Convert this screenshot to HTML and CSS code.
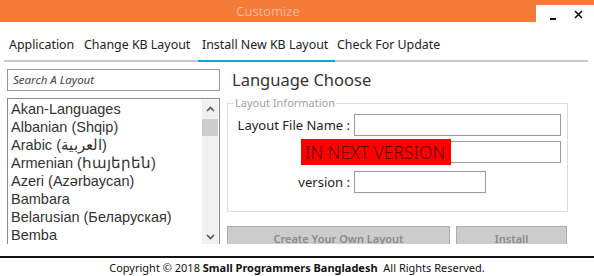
FILE: index.html
```html
<!DOCTYPE html>
<html lang="en">
<head>
    <meta charset="UTF-8">
    <title>Customize</title>
    <link rel="stylesheet" href="styles.css">
</head>
<body>
    <div class="window">
        <div class="titlebar">
            <div class="title">Customize</div>
            <div class="controls">
                <span class="ctl min"></span>
                <span class="ctl close">
                    <svg width="9" height="9" viewBox="0 0 9 9"><path d="M1 1L8 8M8 1L1 8" stroke="#111" stroke-width="1.6"/></svg>
                </span>
            </div>
        </div>

        <div class="tabs">
            <div class="tab t1">Application</div>
            <div class="tab t2">Change KB Layout</div>
            <div class="tab t3 active">Install New KB Layout</div>
            <div class="tab t4">Check For Update</div>
        </div>

        <div class="main">
            <div class="left">
                <input class="search" type="text" placeholder="Search A Layout">
                <div class="list">
                    <ul class="items">
                        <li>Akan-Languages</li>
                        <li>Albanian (Shqip)</li>
                        <li>Arabic (العربية)</li>
                        <li>Armenian (հայերեն)</li>
                        <li>Azeri (Azərbaycan)</li>
                        <li>Bambara</li>
                        <li>Belarusian (Беларуская)</li>
                        <li>Bemba</li>
                    </ul>
                    <div class="scroll">
                        <svg class="arrow" width="9" height="6" viewBox="0 0 9 6"><path d="M1 5L4.5 1.5L8 5" fill="none" stroke="#555" stroke-width="1.6"/></svg>
                        <div class="thumb"></div>
                        <div class="track"></div>
                        <svg class="arrow" width="9" height="6" viewBox="0 0 9 6"><path d="M1 1L4.5 4.5L8 1" fill="none" stroke="#555" stroke-width="1.6"/></svg>
                    </div>
                </div>
            </div>

            <div class="right">
                <h2>Language Choose</h2>
                <fieldset class="group">
                    <legend>Layout Information</legend>
                    <div class="row">
                        <label class="lbl">Layout File Name :</label>
                        <input class="field wide" type="text">
                    </div>
                    <div class="row red-row">
                        <span class="next">IN NEXT VERSION</span>
                        <input class="field behind" type="text">
                    </div>
                    <div class="row">
                        <label class="lbl">version :</label>
                        <input class="field short" type="text">
                    </div>
                </fieldset>
                <div class="buttons">
                    <button class="btn create">Create Your Own Layout</button>
                    <button class="btn install">Install</button>
                </div>
            </div>
        </div>

        <div class="footer">
            Copyright © 2018 <b>Small Programmers Bangladesh</b>&nbsp; All Rights Reserved.
        </div>
    </div>
</body>
</html>
```

FILE: styles.css
```css
body {
    margin: 0;
    font-family: "Noto Sans", "Open Sans", sans-serif;
    background: #fff;
    color: #222;
}
.window {
    width: 594px;
    height: 276px;
    overflow: hidden;
}
.titlebar {
    height: 22px;
    background-color: #f47a38;
    display: flex;
}
.title {
    flex: 1;
    text-align: center;
    color: #f9cdb8;
    font-size: 13px;
    font-weight: 300;
    line-height: 22px;
    letter-spacing: 0.2px;
}
.controls {
    width: 58px;
    height: 17px;
    margin-top: 5px;
    background: #fff;
    display: flex;
}
.ctl {
    width: 29px;
    display: flex;
    align-items: center;
    justify-content: center;
}
.min::after {
    content: "";
    width: 6px;
    height: 2px;
    background: #111;
    margin-top: 10px;
    margin-left: 4px;
}
.close svg {
    margin-top: 2px;
    margin-left: -3px;
}

.tabs {
    display: flex;
    margin: 0 6px 0 4px;
    height: 40px;
}
.tab {
    font-size: 12.4px;
    padding: 14px 0 0 4px;
    border-bottom: 2px solid #c8c8c8;
    white-space: nowrap;
    box-sizing: border-box;
}
.t1 { width: 76px; padding-left: 5px; }
.t2 { width: 118px; }
.t3 { width: 137px; border-bottom-color: #00a8e0; }
.t4 { flex: 1; padding-left: 2px; }

.main {
    display: flex;
    height: 182px;
    overflow: hidden;
}
.left {
    width: 213px;
    margin-left: 7px;
    padding-top: 5px;
}
.search {
    width: 100%;
    height: 22px;
    box-sizing: border-box;
    border: 1px solid #999;
    padding: 0 5px;
    font-family: "Noto Sans", sans-serif;
    font-size: 11.5px;
    font-style: italic;
    outline: none;
}
.search::placeholder {
    color: #444;
}
.list {
    margin-top: 7px;
    height: 148px;
    box-sizing: border-box;
    border: 1px solid #8a8a8a;
    border-bottom: none;
    display: flex;
    overflow: hidden;
}
.items {
    flex: 1;
    list-style: none;
    margin: 0;
    padding: 1px 0 0 3px;
    font-family: "Liberation Sans", Arial, sans-serif;
    font-size: 14.5px;
    line-height: 18px;
    color: #333;
}
.scroll {
    width: 16px;
    margin: 1px 1px 0 0;
    background: #f0f0f0;
    display: flex;
    flex-direction: column;
    align-items: center;
}
.arrow {
    margin: 6px 0;
}
.thumb {
    width: 16px;
    height: 17px;
    background: #cdcdcd;
    margin-top: 1px;
}
.track {
    flex: 1;
}

.right {
    width: 341px;
    margin-left: 7px;
}
h2 {
    font-size: 16.5px;
    font-weight: 400;
    color: #333;
    margin: 6px 0 0 5px;
    line-height: 24px;
}
.group {
    margin: 5px 0 0 0;
    padding: 5px 0 15px 0;
    border: 1px solid #dcdcdc;
}
legend {
    font-size: 11px;
    color: #a0a0a0;
    padding: 0 1px;
    margin-left: 6px;
    line-height: 12px;
}
.row {
    display: flex;
    align-items: center;
    height: 21px;
    margin-bottom: 4px;
}
.lbl {
    width: 122px;
    text-align: right;
    font-size: 13px;
    color: #222;
    margin-right: 4px;
}
.field {
    height: 22px;
    box-sizing: border-box;
    border: 1px solid #9a9a9a;
    outline: none;
}
.wide { width: 207px; }
.short { width: 132px; }
.red-row {
    height: 26px;
    margin-bottom: 6px;
    padding-left: 73px;
}
.next {
    width: 150px;
    height: 26px;
    background: #ff0000;
    color: #5a0000;
    font-size: 17.5px;
    font-weight: 300;
    line-height: 26px;
    padding-left: 4px;
    box-sizing: border-box;
    white-space: nowrap;
    overflow: hidden;
}
.behind {
    width: 110px;
    border-left: none;
}
.buttons {
    display: flex;
    gap: 6px;
    margin-top: 14px;
}
.btn {
    height: 24px;
    background-color: #cccccc;
    border: 1px solid #adadad;
    color: #8a8a8a;
    font-family: "Noto Sans", sans-serif;
    font-size: 11px;
    font-weight: 600;
    padding: 0;
}
.create { width: 223px; }
.install { width: 111px; }

.footer {
    margin-top: 12px;
    border-top: 2px solid #111;
    text-align: center;
    font-size: 11px;
    line-height: 19px;
    color: #111;
}
.footer b {
    font-weight: 700;
}
```
